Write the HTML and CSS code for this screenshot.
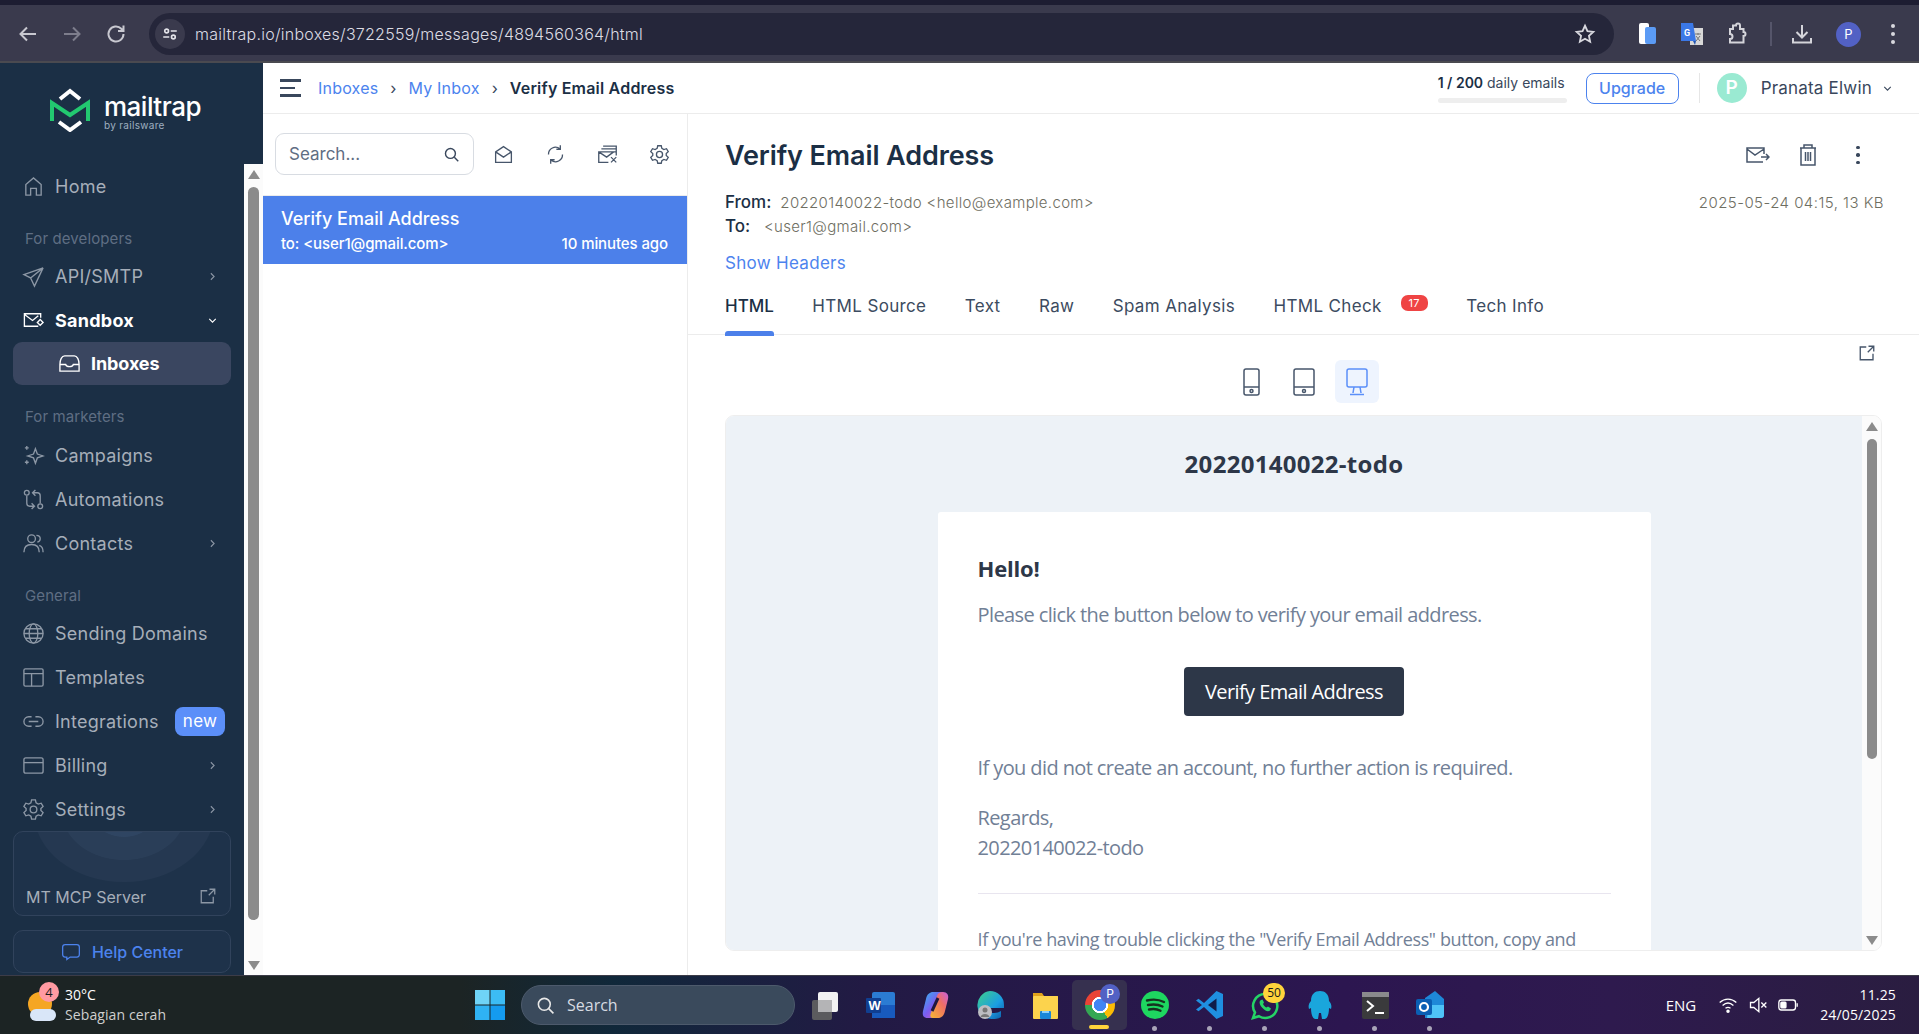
FILE: index.html
```html
<!DOCTYPE html>
<html>

<head>
    <meta charset="utf-8">
    <title>Verify Email Address - Mailtrap</title>
    <link rel="stylesheet" href="styles.css">
</head>

<body>

    <!-- browser chrome -->
    <div class="tabstrip"></div>
    <div class="toolbar">
        <svg class="tool-icon" viewBox="0 0 24 24"><path d="M20 12H5M11 5.500 4.500 12l6.500 6.500"/></svg>
        <svg class="tool-icon tool-off" viewBox="0 0 24 24"><path d="M4 12h15M13 5.500l6.500 6.500-6.500 6.500"/></svg>
        <svg class="tool-icon" viewBox="0 0 24 24"><path d="M19.500 12a7.500 7.500 0 1 1-2.200-5.300L19.500 9M19.500 3.500V9H14"/></svg>
        <div class="addressbar">
            <span class="site-btn">
                <svg viewBox="0 0 24 24"><circle cx="7.500" cy="8" r="2.500"/><path d="M13 8h8M3 16h8"/><circle cx="16.500" cy="16" r="2.500"/></svg>
            </span>
            <span class="url">mailtrap.io/inboxes/3722559/messages/4894560364/html</span>
            <svg class="star" viewBox="0 0 24 24"><path d="m12 3 2.700 6 6.300.7-4.700 4.300 1.300 6.500L12 17.200 6.400 20.500 7.700 14 3 9.700 9.300 9z"/></svg>
        </div>
        <div class="ext-group">
            <svg class="ext" viewBox="0 0 24 24"><rect x="3" y="1" width="10" height="21" rx="2" fill="#fff"/><rect x="9" y="5" width="11" height="17" rx="2" fill="#5b9bf5"/></svg>
            <svg class="ext" viewBox="0 0 24 24"><rect x="10" y="6" width="13" height="17" fill="#d8d8d8"/><path d="M1 1h12l3 18H1z" fill="#3b78e7"/><path d="m13 19 2 4 1-4z" fill="#2456b0"/><text x="4" y="14" class="ext-g">G</text><path d="M15 12h6M18 11v2M16 19l4-5M16 14l4 5" stroke="#777" fill="none"/></svg>
            <svg class="ext ext-line" viewBox="0 0 24 24"><path d="M9 3.500h3a2 2 0 0 1 4 0V7h3.500v3a2 2 0 0 1 0 4v6.500H6V17a2.500 2.500 0 0 0 0-5V7h3z"/></svg>
            <span class="tool-sep"></span>
            <svg class="ext ext-line" viewBox="0 0 24 24"><path d="M12 3v12M6.500 10l5.500 5.500 5.500-5.500M3 16v4.500h18V16"/></svg>
            <span class="chrome-avatar">P</span>
            <span class="chrome-dots"><i></i><i></i><i></i></span>
        </div>
    </div>

    <div class="app">

        <aside class="sidebar">
            <div class="logo">
                <svg class="logo-mark" viewBox="0 0 40 44">
                    <path class="logo-white" d="M10 11 20 3l10 8"/>
                    <path class="logo-green" d="M2 33V15l18 12 18-12v18"/>
                    <path class="logo-white" d="m9 34 11 8 11-8"/>
                </svg>
                <div class="logo-text">
                    <div class="logo-name">mailtrap</div>
                    <div class="logo-sub">by railsware</div>
                </div>
            </div>
            <div class="side-body">
                <nav class="side-nav">
                    <a class="nav-row"><svg class="nav-icon" viewBox="0 0 24 24"><path d="M4 21V10l8-7 8 7v11h-5v-7H9v7z"/></svg>Home</a>
                    <div class="nav-label">For developers</div>
                    <a class="nav-row"><svg class="nav-icon" viewBox="0 0 24 24"><path d="M22 3 2 10l7 3.500L22 3l-9 19-4-8.500"/></svg>API/SMTP<svg class="nav-chev" viewBox="0 0 24 24"><path d="m9 6 6 6-6 6"/></svg></a>
                    <a class="nav-row nav-on"><svg class="nav-icon" viewBox="0 0 24 24"><path d="M17 18H2.500V5h17v4M3 6l8 6 6-5"/><path d="m19 11 3 3-3 3-3-3z"/></svg>Sandbox<svg class="nav-chev" viewBox="0 0 24 24"><path d="m6 9 6 6 6-6"/></svg></a>
                    <a class="nav-row nav-sub"><svg class="nav-icon" viewBox="0 0 24 24"><path d="M2 13c0-5 2-9 5-9h10c3 0 5 4 5 9v7H2zM2 13h6c1 3 7 3 8 0h6"/></svg>Inboxes</a>
                    <div class="nav-label nav-label-tall">For marketers</div>
                    <a class="nav-row"><svg class="nav-icon" viewBox="0 0 24 24"><path d="m14 5 2 5.500 6 2-6 2-2 5.500-2-5.500-6-2 6-2zM5 2v4M3 4h4M5 17v4M3 19h4"/></svg>Campaigns</a>
                    <a class="nav-row"><svg class="nav-icon" viewBox="0 0 24 24"><circle cx="5" cy="5" r="2.500"/><circle cx="19" cy="19" r="2.500"/><path d="M5 8v8c0 2 1 3 3 3h5M10 16l3 3-3 3M19 16V8c0-2-1-3-3-3h-4M14 2l-3 3 3 3"/></svg>Automations</a>
                    <a class="nav-row"><svg class="nav-icon" viewBox="0 0 24 24"><circle cx="10" cy="7" r="4"/><path d="M2 21c0-5 3-8 8-8s8 3 8 8M15 3.500c3 0 4 2 4 3.500s-1 3-3 3.500M18 14c3 1 4 4 4 7"/></svg>Contacts<svg class="nav-chev" viewBox="0 0 24 24"><path d="m9 6 6 6-6 6"/></svg></a>
                    <div class="nav-label">General</div>
                    <a class="nav-row"><svg class="nav-icon" viewBox="0 0 24 24"><circle cx="12" cy="12" r="10"/><ellipse cx="12" cy="12" rx="4.500" ry="10"/><path d="M2 12h20M3.500 7h17M3.500 17h17"/></svg>Sending Domains</a>
                    <a class="nav-row"><svg class="nav-icon" viewBox="0 0 24 24"><rect x="2" y="3" width="20" height="18" rx="1.500"/><path d="M2 8h20M10 8v13"/></svg>Templates</a>
                    <a class="nav-row"><svg class="nav-icon" viewBox="0 0 24 24"><path d="M10 7H7a5 5 0 0 0 0 10h3M14 7h3a5 5 0 0 1 0 10h-3M7 12h10"/></svg>Integrations<span class="new-pill">new</span></a>
                    <a class="nav-row"><svg class="nav-icon" viewBox="0 0 24 24"><rect x="2" y="4" width="20" height="16" rx="2"/><path d="M2 9h20"/></svg>Billing<svg class="nav-chev" viewBox="0 0 24 24"><path d="m9 6 6 6-6 6"/></svg></a>
                    <a class="nav-row"><svg class="nav-icon" viewBox="0 0 24 24"><circle cx="12" cy="12" r="3.500"/><path d="m10 2-.7 3-2.300 1.300-3-.9-2 3.400 2.300 2.200v2l-2.300 2.200 2 3.400 3-.9L9.300 19l.7 3h4l.7-3 2.300-1.300 3 .9 2-3.400-2.300-2.200v-2l2.300-2.200-2-3.400-3 .9L14.700 5 14 2z"/></svg>Settings<svg class="nav-chev" viewBox="0 0 24 24"><path d="m9 6 6 6-6 6"/></svg></a>
                    <a class="mcp-card">
                        <span class="mcp-rings"></span>
                        <span class="mcp-name">MT MCP Server</span>
                        <svg class="mcp-link" viewBox="0 0 24 24"><path d="M11 5H3v16h16v-8M13 11l8-8M14 3h7v7"/></svg>
                    </a>
                    <a class="help-btn"><svg viewBox="0 0 24 24"><path d="M5 3h14c2 0 3 1 3 3v9c0 2-1 3-3 3h-8l-4 3v-3H5c-2 0-3-1-3-3V6c0-2 1-3 3-3z"/><path d="M8 10.500h.01M12 10.500h.01M16 10.500h.01"/></svg>Help Center</a>
                </nav>
                <div class="side-scroll">
                    <span class="arrow-up"></span>
                    <span class="side-thumb"></span>
                    <span class="arrow-down"></span>
                </div>
            </div>
        </aside>

        <div class="workspace">
            <header class="topbar">
                <span class="burger"><i></i><i></i><i></i></span>
                <a class="crumb">Inboxes</a><span class="crumb-sep">›</span>
                <a class="crumb">My Inbox</a><span class="crumb-sep">›</span>
                <strong class="crumb-now">Verify Email Address</strong>
                <div class="quota">
                    <div class="quota-text"><b>1 / 200</b> daily emails</div>
                    <div class="quota-bar"></div>
                </div>
                <a class="upgrade">Upgrade</a>
                <span class="top-sep"></span>
                <span class="user-avatar">P</span>
                <span class="user-name">Pranata Elwin</span>
                <svg class="user-chev" viewBox="0 0 24 24"><path d="m6 9 6 6 6-6"/></svg>
            </header>

            <div class="panes">
                <section class="list-pane">
                    <div class="list-tools">
                        <div class="search">
                            <span>Search...</span>
                            <svg viewBox="0 0 24 24"><circle cx="10.500" cy="10.500" r="7"/><path d="m16 16 5.500 5.500"/></svg>
                        </div>
                        <svg class="list-icon" viewBox="0 0 24 24"><path d="M3 21V9l9-6 9 6v12zM3 9l9 6 9-6"/></svg>
                        <svg class="list-icon" viewBox="0 0 24 24"><path d="M4 12a8 8 0 0 1 13-6.500M20 12a8 8 0 0 1-13 6.500M17.500 1.500v4.500H13M6.500 22.500V18H11"/></svg>
                        <svg class="list-icon" viewBox="0 0 24 24"><path d="M13 21H2V9h20v4M2 9l9 6 8-6M5 5.500h17v3M7 2.500h15v3M16 15l6 6M22 15l-6 6"/></svg>
                        <svg class="list-icon" viewBox="0 0 24 24"><circle cx="12" cy="12" r="3.500"/><path d="m10 2-.7 3-2.300 1.300-3-.9-2 3.400 2.300 2.200v2l-2.300 2.200 2 3.400 3-.9L9.300 19l.7 3h4l.7-3 2.300-1.300 3 .9 2-3.400-2.300-2.200v-2l2.300-2.200-2-3.400-3 .9L14.700 5 14 2z"/></svg>
                    </div>
                    <div class="msg-row">
                        <div class="msg-title">Verify Email Address</div>
                        <div class="msg-sub"><span>to: &lt;user1@gmail.com&gt;</span><span>10 minutes ago</span></div>
                    </div>
                </section>

                <section class="msg-pane">
                    <div class="msg-head">
                        <h1>Verify Email Address</h1>
                        <div class="msg-actions">
                            <svg viewBox="0 0 24 24"><path d="M17 19H1V5h17v6M1 6l8 6 9-6M15 14h8M20 11l3 3-3 3"/></svg>
                            <svg viewBox="0 0 24 24"><path d="M4 5h16M8 5V2h8v3M5 5v17h14V5M9.500 9v9M12 9v9M14.500 9v9"/></svg>
                            <span class="dots-dark"><i></i><i></i><i></i></span>
                        </div>
                    </div>
                    <div class="meta-line"><span class="meta-key">From:</span> <span class="meta-val">20220140022-todo &lt;hello@example.com&gt;</span><span class="meta-date">2025-05-24 04:15, 13 KB</span></div>
                    <div class="meta-line"><span class="meta-key">To:</span> &nbsp;<span class="meta-val">&lt;user1@gmail.com&gt;</span></div>
                    <a class="show-headers">Show Headers</a>

                    <div class="tabs">
                        <a class="tab tab-on">HTML</a>
                        <a class="tab">HTML Source</a>
                        <a class="tab">Text</a>
                        <a class="tab">Raw</a>
                        <a class="tab">Spam Analysis</a>
                        <a class="tab">HTML Check<span class="tab-badge">17</span></a>
                        <a class="tab">Tech Info</a>
                    </div>

                    <div class="device-bar">
                        <span class="device"><svg class="ic-phone" viewBox="0 0 17 28"><rect x="1" y="1" width="15" height="26" rx="2"/><path d="M1 19h15"/><circle cx="8.500" cy="23" r="1.500"/></svg></span>
                        <span class="device"><svg class="ic-tablet" viewBox="0 0 22 28"><rect x="1" y="1" width="20" height="26" rx="2"/><path d="M1 19h20"/><circle cx="11" cy="23" r="1.500"/></svg></span>
                        <span class="device device-on"><svg class="ic-desk" viewBox="0 0 22 28"><rect x="1" y="1" width="20" height="18" rx="2"/><path d="m8 19-1 6M14 19l1 6M4 26.500h14"/></svg></span>
                        <svg class="popout" viewBox="0 0 24 24"><path d="M11 4H3v17h17v-8M13 11l8-8M14 3h7v7"/></svg>
                    </div>

                    <div class="preview">
                        <div class="mail">
                            <div class="mail-brand">20220140022-todo</div>
                            <div class="mail-card">
                                <h2>Hello!</h2>
                                <p class="mail-p1">Please click the button below to verify your email address.</p>
                                <div class="mail-action"><a class="mail-btn">Verify Email Address</a></div>
                                <p class="mail-p2">If you did not create an account, no further action is required.</p>
                                <p class="mail-p3">Regards,<br>20220140022-todo</p>
                                <hr>
                                <p class="mail-sub">If you're having trouble clicking the "Verify Email Address" button, copy and</p>
                            </div>
                        </div>
                        <div class="prev-scroll">
                            <span class="arrow-up"></span>
                            <span class="prev-thumb"></span>
                            <span class="arrow-down"></span>
                        </div>
                    </div>
                </section>
            </div>
        </div>
    </div>

    <!-- windows taskbar -->
    <footer class="taskbar">
        <div class="weather">
            <span class="weather-icon"><span class="sun"></span><span class="cloud"></span><span class="weather-badge">4</span></span>
            <div class="weather-text">30°C<br><span>Sebagian cerah</span></div>
        </div>
        <svg class="start" viewBox="0 0 30 30">
            <rect width="14.500" height="14.500" fill="#6fd3f7"/><rect x="15.500" width="14.500" height="14.500" fill="#3cbcf5"/>
            <rect y="15.500" width="14.500" height="14.500" fill="#2fb2f3"/><rect x="15.500" y="15.500" width="14.500" height="14.500" fill="#149bef"/>
        </svg>
        <div class="tb-search">
            <svg viewBox="0 0 24 24"><circle cx="10.500" cy="10.500" r="7.500"/><path d="m16 16 6 6"/></svg>
            <span>Search</span>
        </div>
        <div class="tb-apps">
            <span class="app-slot"><svg viewBox="0 0 30 30"><rect x="2" y="10" width="20" height="20" rx="2" fill="#5b5b5e"/><rect x="8" y="2" width="20" height="20" rx="2" fill="#f2f2f2"/><rect x="8" y="10" width="14" height="12" fill="#b4b4b6"/></svg></span>
            <span class="app-slot"><svg viewBox="0 0 30 30"><rect x="7" y="2" width="23" height="26" rx="2" fill="#2b7cd3"/><rect x="7" y="15" width="23" height="13" fill="#185abd"/><rect x="1" y="8" width="15" height="15" rx="1" fill="#103f91"/><text x="3.500" y="20" class="app-w">W</text></svg></span>
            <span class="app-slot"><svg viewBox="0 0 30 30"><defs><linearGradient id="cpa" x1="0" y1="0" x2="1" y2="1"><stop offset="0" stop-color="#2fb8ee"/><stop offset=".5" stop-color="#7b5cf0"/><stop offset="1" stop-color="#ee5fa8"/></linearGradient><linearGradient id="cpb" x1="0" y1="1" x2="1" y2="0"><stop offset="0" stop-color="#f7b733"/><stop offset=".6" stop-color="#ef6f64"/><stop offset="1" stop-color="#c85fe0"/></linearGradient></defs><path d="M13 2h7c3 0 4 2 3 5l-6 18c-1 3-3 3-5 3H8c-4 0-6-2-5-7l3-12c1-5 4-7 7-7z" fill="url(#cpa)"/><path d="M18 28h-5c-3 0-3-3-2-5l6-17c1-3 3-4 5-4h1c4 0 6 3 5 7l-3 12c-1 5-4 7-7 7z" fill="url(#cpb)"/><path d="M12 21 18 8" stroke="#1f1840" stroke-width="3"/></svg></span>
            <span class="app-slot"><svg viewBox="0 0 30 30"><defs><linearGradient id="edg" x1="0" y1="0" x2="1" y2="1"><stop offset="0" stop-color="#3fd08a"/><stop offset=".6" stop-color="#1b9de2"/><stop offset="1" stop-color="#0c59a4"/></linearGradient></defs><path d="M15 1a14 14 0 0 1 14 14v3H13c0 3 2 5 6 5 3 0 5-1 7-2v6c-3 2-6 2-8 2A14 14 0 0 1 15 1z" fill="url(#edg)"/><circle cx="10" cy="22" r="7" fill="#bdbdc2"/><circle cx="10" cy="20" r="2.500" fill="#777"/><path d="M5.500 27c1-4 8-4 9 0z" fill="#777"/></svg></span>
            <span class="app-slot"><svg viewBox="0 0 30 30"><path d="M3 3h9l2 3h14v9H3z" fill="#e0a21b"/><rect x="3" y="6" width="25" height="23" rx="1" fill="#fcd34d"/><rect x="10" y="21" width="11" height="8" rx="1" fill="#1a86d8"/><rect x="12" y="21" width="7" height="2" fill="#8ed0fa"/></svg></span>
            <span class="app-slot app-active"><span class="chrome-logo"></span><span class="chrome-prof">P</span></span>
            <span class="app-slot app-dot"><svg viewBox="0 0 30 30"><circle cx="15" cy="15" r="14" fill="#1ed760"/><path class="spot" d="M7 10.500c6-1.500 12-1 17 1.500M8 15c5-1 10-.8 14.500 1.500M9 19.500c4-.8 8-.6 11.500 1.200"/></svg></span>
            <span class="app-slot app-dot"><svg viewBox="0 0 30 30"><path d="M21.500 1 28 4v22l-6.500 3L9 17l-5.500 4.200L1 19.500 7 15 1 10.500 3.500 8.800 9 13z" fill="#1f8fe0"/><path d="M21.500 8.500v13L13 15z" fill="#0f1d4a"/></svg></span>
            <span class="app-slot app-dot"><svg viewBox="0 0 30 30"><path d="M15 4a12 12 0 0 0-10 18.500L3 28l6-1.800A12 12 0 1 0 15 4z" fill="none" stroke="#25d366" stroke-width="2.500"/><path d="M11 10c-2 1-2 4 1 7.500s6 4.500 8 3l1-2-3-2-1.500 1c-1.500-.5-3-2.500-3.500-3.500l1-1.500-1.500-3z" fill="#25d366"/></svg><span class="wa-badge">50</span></span>
            <span class="app-slot app-dot"><svg viewBox="0 0 30 30"><path d="M6 11C6 4 10 1 15 1s9 3 9 10c2 2 3 5 2 8l-2-1c0 5-1 10-4 11h-3l-1-6h-2l-1 6h-3c-3-1-4-6-4-11l-2 1c-1-3 0-6 2-8z" fill="#1aa6dc"/></svg></span>
            <span class="app-slot app-dot"><svg viewBox="0 0 30 30"><rect x="2" y="2" width="27" height="27" rx="2" fill="#3a3a3c"/><rect x="2" y="2" width="27" height="5" fill="#8a8a8c"/><path d="m7 11 6 5-6 5" fill="none" stroke="#fff" stroke-width="2"/><path d="M15 23h9" stroke="#fff" stroke-width="2"/></svg></span>
            <span class="app-slot app-dot"><svg viewBox="0 0 30 30"><path d="M10 8 20 1l9 8v16c0 2-1 3-3 3H10z" fill="#1e88d8"/><path d="M14 15h15v10c0 2-1 3-3 3H12z" fill="#4fc3f7"/><rect x="1" y="9" width="16" height="16" rx="2" fill="#0a5fb4"/><circle cx="9" cy="17" r="4" fill="none" stroke="#fff" stroke-width="2.200"/></svg></span>
        </div>
        <div class="tray">
            <span class="tray-lang">ENG</span>
            <svg class="tray-icon" viewBox="0 0 24 24"><path d="M2 9c6-5.500 14-5.500 20 0M5.500 12.500c4-3.500 9-3.500 13 0M9 16c2-1.500 4-1.500 6 0"/><circle cx="12" cy="19.500" r="1.300" fill="#fff"/></svg>
            <svg class="tray-icon" viewBox="0 0 24 24"><path d="M3 9v6h4l6 5V4L7 9zM16 9l6 6M22 9l-6 6"/></svg>
            <svg class="tray-icon" viewBox="0 0 24 24"><rect x="1" y="6" width="20" height="12" rx="3"/><rect x="3.500" y="8.500" width="6" height="7" rx="1" fill="#fff"/><path d="M23 10v4"/></svg>
            <div class="tray-clock">11.25<br>24/05/2025</div>
        </div>
    </footer>

</body>

</html>
```
FILE: styles.css
```css
* {
    box-sizing: border-box;
}

html,
body {
    height: 100%;
}

body {
    margin: 0;
    display: flex;
    flex-direction: column;
    overflow: hidden;
    font-family: Inter, "Liberation Sans", sans-serif;
    color: #1b2f45;
    background: #fff;
}

svg {
    display: block;
    flex: none;
}

/* browser chrome */
.tabstrip {
    height: 5px;
    background: #1d1d32;
}

.toolbar {
    height: 58px;
    display: flex;
    align-items: center;
    padding: 2px 15px 0 16px;
    background: #3a3a4d;
    border-bottom: 2px solid #4a4a50;
}

.tool-icon {
    width: 24px;
    height: 24px;
    margin-right: 20px;
    fill: none;
    stroke: #c8c8d0;
    stroke-width: 2;
}

.tool-off {
    stroke: #7d7d8c;
}

.addressbar {
    width: 1465px;
    height: 42px;
    flex: none;
    margin-left: 1px;
    display: flex;
    align-items: center;
    border-radius: 21px;
    background: #25263a;
    padding: 0 18px 0 6px;
}

.site-btn {
    width: 30px;
    height: 30px;
    border-radius: 50%;
    background: #3a3a4d;
    display: flex;
    align-items: center;
    justify-content: center;
    margin-right: 10px;
}

.site-btn svg {
    width: 18px;
    height: 18px;
    fill: none;
    stroke: #e4e4ea;
    stroke-width: 2.200;
}

.url {
    flex: 1;
    font-size: 16px;
    font-weight: 300;
    letter-spacing: .25px;
    color: #dcdce4;
}

.star {
    width: 22px;
    height: 22px;
    fill: none;
    stroke: #d8d8de;
    stroke-width: 2;
}

.ext-group {
    flex: 1;
    display: flex;
    align-items: center;
    padding-left: 22px;
}

.ext {
    width: 24px;
    height: 24px;
    margin-right: 20px;
}

.ext-g {
    font-family: Roboto, sans-serif;
    font-size: 9px;
    font-weight: 700;
    fill: #fff;
}

.ext-line {
    fill: none;
    stroke: #d4d4da;
    stroke-width: 2;
}

.tool-sep {
    width: 2px;
    height: 24px;
    margin: 0 18px 0 2px;
    background: #55556a;
}

.chrome-avatar {
    width: 25px;
    height: 25px;
    margin-left: 2px;
    border-radius: 50%;
    background: #5261c4;
    color: #fff;
    font-size: 13px;
    line-height: 25px;
    text-align: center;
}

.chrome-dots {
    margin-left: 30px;
    display: flex;
    flex-direction: column;
    gap: 4px;
}

.chrome-dots i {
    width: 4px;
    height: 4px;
    border-radius: 50%;
    background: #d8d8de;
}

/* app */
.app {
    flex: 1;
    min-height: 0;
    display: flex;
}

.sidebar {
    width: 263px;
    flex: none;
    display: flex;
    flex-direction: column;
    background: #1b2f45;
}

.logo {
    height: 101px;
    flex: none;
    display: flex;
    padding: 25px 0 0 50px;
    gap: 14px;
}

.logo-mark {
    width: 40px;
    height: 44px;
}

.logo-mark path {
    fill: none;
    stroke-width: 4;
    stroke-linejoin: miter;
}

.logo-white {
    stroke: #fff;
}

.logo-green {
    stroke: #22c870;
}

.logo-name {
    margin-top: 3px;
    font-size: 26px;
    line-height: 32px;
    font-weight: 500;
    letter-spacing: -.5px;
    color: #fff;
}

.logo-sub {
    margin-top: -4px;
    font-size: 10px;
    line-height: 12px;
    letter-spacing: .3px;
    color: #9fb0c0;
}

.side-body {
    flex: 1;
    min-height: 0;
    display: flex;
}

.side-nav {
    width: 244px;
    flex: none;
}

.nav-row {
    height: 44px;
    display: flex;
    align-items: center;
    gap: 10px;
    padding: 0 25px 0 22px;
    font-size: 18px;
    letter-spacing: .25px;
    color: #a6aeb9;
}

.nav-icon {
    width: 23px;
    height: 23px;
    fill: none;
    stroke: #8c97a5;
    stroke-width: 1.400;
}

.nav-chev {
    width: 13px;
    height: 13px;
    margin-left: auto;
    fill: none;
    stroke: #8c97a5;
    stroke-width: 2;
}

.nav-on {
    color: #fff;
    font-weight: 700;
}

.nav-on .nav-icon,
.nav-on .nav-chev {
    stroke: #fff;
}

.nav-sub {
    height: 43px;
    margin: 0 13px;
    padding-left: 45px;
    border-radius: 9px;
    background: #3a4660;
    color: #fff;
    font-weight: 700;
    letter-spacing: -.1px;
}

.nav-sub .nav-icon {
    stroke: #fff;
}

.nav-label {
    height: 46px;
    padding: 15px 0 0 25px;
    font-size: 15px;
    line-height: 31px;
    letter-spacing: .1px;
    color: #5f6e83;
}

.nav-label-tall {
    height: 48px;
    padding-top: 16px;
}

.new-pill {
    width: 50px;
    height: 29px;
    margin-left: auto;
    margin-right: -6px;
    border-radius: 8px;
    background: #5b8ff9;
    color: #fff;
    font-size: 17px;
    line-height: 29px;
    text-align: center;
}

.mcp-card {
    position: relative;
    height: 85px;
    margin: 0 13px;
    display: flex;
    align-items: flex-end;
    justify-content: space-between;
    padding: 0 13px 8px 12px;
    border: 1px solid #31435c;
    border-radius: 10px;
    background: #1e324a;
    overflow: hidden;
    font-size: 16px;
    color: #a6aeb9;
}

.mcp-rings {
    position: absolute;
    left: 20px;
    top: -90px;
    width: 180px;
    height: 140px;
    border-radius: 50%;
    background: radial-gradient(closest-side, #2f4562 35%, #2a3e58 36%, #2a3e58 68%, #253851 69%);
}

.mcp-name,
.mcp-link {
    position: relative;
}

.mcp-link {
    width: 18px;
    height: 18px;
    margin-bottom: 2px;
    fill: none;
    stroke: #8c97a5;
    stroke-width: 1.700;
}

.help-btn {
    height: 43px;
    margin: 14px 13px 0;
    display: flex;
    align-items: center;
    justify-content: center;
    gap: 11px;
    border: 1px solid #31435c;
    border-radius: 10px;
    background: #1e324a;
    font-size: 16px;
    font-weight: 500;
    color: #4c83ee;
}

.help-btn svg {
    width: 20px;
    height: 20px;
    fill: none;
    stroke: #4c83ee;
    stroke-width: 1.500;
}

.side-scroll {
    width: 19px;
    display: flex;
    flex-direction: column;
    align-items: center;
    background: #fbfbfb;
    padding-top: 6px;
}

.arrow-up,
.arrow-down {
    width: 0;
    height: 0;
    flex: none;
    border-left: 6px solid transparent;
    border-right: 6px solid transparent;
}

.arrow-up {
    border-bottom: 9px solid #8b8b8b;
}

.arrow-down {
    margin-top: auto;
    margin-bottom: 5px;
    border-top: 9px solid #8b8b8b;
}

.side-thumb {
    width: 11px;
    height: 733px;
    margin-top: 8px;
    border-radius: 6px;
    background: #8b8b8b;
}

.workspace {
    flex: 1;
    min-width: 0;
    display: flex;
    flex-direction: column;
}

/* top bar */
.topbar {
    height: 51px;
    flex: none;
    display: flex;
    align-items: center;
    padding: 0 25px 0 17px;
    border-bottom: 1px solid #ececec;
    font-size: 16px;
}

.burger {
    width: 21px;
    margin-right: 17px;
    display: flex;
    flex-direction: column;
    gap: 5px;
}

.burger i {
    height: 2.500px;
    background: #39475c;
}

.burger i:nth-child(2) {
    width: 15px;
}

.crumb {
    letter-spacing: .2px;
    color: #4c83ee;
}

.crumb-sep {
    margin: 0 12px;
    color: #39475c;
}

.crumb-now {
    font-weight: 600;
    letter-spacing: .2px;
    color: #1b2f45;
}

.quota {
    width: 129px;
    margin-left: auto;
}

.quota-text {
    font-size: 14px;
    line-height: 18px;
    white-space: nowrap;
    color: #39475c;
}

.quota-text b {
    font-weight: 600;
    color: #1b2f45;
}

.quota-bar {
    height: 5px;
    margin-top: 6px;
    border-radius: 3px;
    background: #eee;
}

.upgrade {
    width: 93px;
    height: 31px;
    margin-left: 19px;
    border: 1px solid #4c83ee;
    border-radius: 8px;
    font-weight: 500;
    line-height: 29px;
    text-align: center;
    color: #4c83ee;
}

.top-sep {
    width: 1px;
    height: 30px;
    margin: 0 17px 0 20px;
    background: #e6e6e6;
}

.user-avatar {
    width: 30px;
    height: 30px;
    border-radius: 50%;
    background: #9aead2;
    color: #fff;
    font-size: 19px;
    font-weight: 600;
    line-height: 30px;
    text-align: center;
}

.user-name {
    margin-left: 14px;
    font-size: 17px;
    letter-spacing: .2px;
    color: #39475c;
}

.user-chev {
    width: 13px;
    height: 13px;
    margin-left: 9px;
    fill: none;
    stroke: #39475c;
    stroke-width: 2;
}

.panes {
    flex: 1;
    min-height: 0;
    display: flex;
}

/* list */
.list-pane {
    width: 425px;
    flex: none;
    border-right: 1px solid #ececec;
}

.list-tools {
    height: 82px;
    display: flex;
    align-items: center;
    padding: 0 0 1px 12px;
    border-bottom: 1px solid #ececec;
}

.search {
    width: 199px;
    height: 42px;
    flex: none;
    margin-right: 19px;
    display: flex;
    align-items: center;
    justify-content: space-between;
    padding: 0 13px;
    border: 1px solid #d8dce2;
    border-radius: 9px;
    font-size: 17px;
    color: #5f6e83;
}

.search svg {
    width: 17px;
    height: 17px;
    fill: none;
    stroke: #39475c;
    stroke-width: 2;
}

.list-icon {
    width: 21px;
    height: 21px;
    margin-right: 31px;
    fill: none;
    stroke: #47566b;
    stroke-width: 1.500;
}

.list-icon:last-child {
    margin-right: 0;
}

.msg-row {
    height: 68px;
    padding: 12px 19px 0 18px;
    background: #4c80ea;
    color: #fff;
}

.msg-title {
    font-size: 18px;
    line-height: 22px;
    font-weight: 500;
}

.msg-sub {
    margin-top: 5px;
    display: flex;
    justify-content: space-between;
    font-size: 15px;
    line-height: 18px;
    font-weight: 500;
    letter-spacing: -.1px;
}

/* message */
.msg-pane {
    flex: 1;
    min-width: 0;
    display: flex;
    flex-direction: column;
    padding-left: 37px;
}

.msg-head {
    height: 76px;
    flex: none;
    display: flex;
    align-items: center;
    justify-content: space-between;
    padding: 6px 49px 0 0;
}

h1 {
    margin: 0;
    font-size: 27px;
    font-weight: 600;
    letter-spacing: -.1px;
}

.msg-actions {
    display: flex;
    align-items: center;
    gap: 26px;
}

.msg-actions svg {
    width: 24px;
    height: 24px;
    fill: none;
    stroke: #47566b;
    stroke-width: 1.500;
}

.dots-dark {
    width: 24px;
    display: flex;
    flex-direction: column;
    align-items: center;
    gap: 4px;
}

.dots-dark i {
    width: 3.500px;
    height: 3.500px;
    border-radius: 50%;
    background: #39475c;
}

.meta-line {
    height: 24px;
    flex: none;
    display: flex;
    align-items: center;
    padding-right: 35px;
    font-size: 17px;
}

.meta-key {
    margin-right: 9px;
    font-weight: 500;
}

.meta-val {
    font-size: 15px;
    font-weight: 300;
    letter-spacing: .33px;
    color: #6e6e62;
}

.meta-date {
    margin-left: auto;
    font-size: 15px;
    font-weight: 300;
    letter-spacing: .45px;
    color: #6e6e62;
}

.show-headers {
    margin-top: 13px;
    flex: none;
    font-size: 17px;
    line-height: 24px;
    letter-spacing: .3px;
    color: #4c83ee;
}

.tabs {
    height: 60px;
    flex: none;
    display: flex;
    align-items: flex-start;
    gap: 38.400px;
    margin: 0 0 0 -37px;
    padding: 19px 0 0 37px;
    border-bottom: 1px solid #ececec;
    font-size: 17px;
    letter-spacing: .35px;
    color: #3c4b60;
}

.tab {
    position: relative;
    line-height: 24px;
    display: flex;
    gap: 19px;
}

.tab-on {
    font-weight: 500;
    letter-spacing: 0;
    color: #1b2f45;
}

.tab-on::after {
    content: "";
    position: absolute;
    left: 0;
    right: 0;
    top: 37px;
    height: 5px;
    border-radius: 3px 3px 0 0;
    background: #4c80ea;
}

.tab-badge {
    width: 27px;
    height: 16px;
    margin-top: 1px;
    border-radius: 7px;
    background: #ef4444;
    color: #fff;
    font-size: 11px;
    line-height: 16px;
    text-align: center;
}

.device-bar {
    position: relative;
    height: 80px;
    flex: none;
    display: flex;
    justify-content: center;
    align-items: flex-start;
    gap: 9px;
    padding: 25px 36px 0 0;
}

.device {
    width: 44px;
    height: 43px;
    display: flex;
    align-items: center;
    justify-content: center;
    border-radius: 6px;
}

.device svg {
    height: 28px;
    width: auto;
    fill: none;
    stroke: #47566b;
    stroke-width: 1.500;
}

.device-on {
    background: #eef4fe;
}

.device-on svg {
    stroke: #5b8ff9;
}

.popout {
    position: absolute;
    right: 43px;
    top: 9px;
    width: 18px;
    height: 18px;
    fill: none;
    stroke: #47566b;
    stroke-width: 1.800;
}

/* preview */
.preview {
    height: 536px;
    width: 1157px;
    flex: none;
    display: flex;
    border: 1px solid #eee;
    border-radius: 9px;
    overflow: hidden;
}

.mail {
    flex: 1;
    min-width: 0;
    padding-top: 24px;
    overflow: hidden;
    background: #edf2f7;
    font-family: "Open Sans", sans-serif;
    color: #718096;
}

.mail-brand {
    height: 72px;
    font-size: 24px;
    line-height: 48px;
    font-weight: 700;
    letter-spacing: .3px;
    text-align: center;
    color: #2d3748;
}

.mail-card {
    width: 713px;
    height: 500px;
    margin: 0 auto;
    padding: 39px 40px;
    background: #fff;
    border-radius: 3px 3px 0 0;
    font-size: 20px;
    letter-spacing: -.6px;
}

h2 {
    margin: 0;
    font-size: 22px;
    line-height: 34px;
    font-weight: 700;
    letter-spacing: -.2px;
    color: #2d3748;
}

.mail-card p {
    margin: 0;
    line-height: 30px;
}

.mail-p1 {
    padding-top: 15px;
}

.mail-action {
    margin-top: 37px;
    display: flex;
    justify-content: center;
}

.mail-btn {
    width: 220px;
    height: 49px;
    border-radius: 4px;
    background: #2d3748;
    color: #fff;
    line-height: 50px;
    text-align: center;
}

.mail-card .mail-p2 {
    padding-top: 37px;
}

.mail-card .mail-p3 {
    padding-top: 20px;
}

hr {
    height: 1px;
    margin: 30px 0 30px;
    border: 0;
    background: #e8e5ef;
}

.mail-card .mail-sub {
    font-size: 18px;
    letter-spacing: -.4px;
}

.prev-scroll {
    width: 19px;
    flex: none;
    display: flex;
    flex-direction: column;
    align-items: center;
    padding-top: 6px;
    background: #fbfbfb;
}

.prev-thumb {
    width: 10px;
    height: 320px;
    margin-top: 8px;
    border-radius: 5px;
    background: #8b8b8b;
}

/* taskbar */
.taskbar {
    height: 59px;
    flex: none;
    display: flex;
    align-items: center;
    border-top: 1px solid #3c3c48;
    background: linear-gradient(90deg, #1c2424 0, #1c2424 24%, #10283a 32%, #221a44 45%, #2c1650 70%, #2e1a4e 84%, #2a1d40 100%);
    color: #fff;
}

.weather {
    width: 475px;
    flex: none;
    display: flex;
    align-items: center;
    padding-left: 28px;
    gap: 10px;
}

.weather-icon {
    position: relative;
    width: 27px;
    height: 32px;
}

.sun {
    position: absolute;
    left: 0;
    top: 3px;
    width: 24px;
    height: 24px;
    border-radius: 50%;
    background: #f5a623;
}

.cloud {
    position: absolute;
    left: 2px;
    top: 20px;
    width: 26px;
    height: 12px;
    border-radius: 8px;
    background: #d9e6f8;
}

.weather-badge {
    position: absolute;
    left: 11px;
    top: -7px;
    width: 20px;
    height: 20px;
    border-radius: 50%;
    background: #ff9aa2;
    color: #1b1b1b;
    font-size: 13px;
    line-height: 20px;
    text-align: center;
    font-family: "Open Sans", sans-serif;
}

.weather-text {
    font-family: "Open Sans", sans-serif;
    font-size: 14px;
    line-height: 20px;
}

.weather-text span {
    letter-spacing: .1px;
    color: #cfcfcf;
}

.start {
    width: 30px;
    height: 30px;
    margin-right: 16px;
}

.tb-search {
    width: 274px;
    height: 40px;
    flex: none;
    display: flex;
    align-items: center;
    padding-left: 14px;
    gap: 12px;
    border: 1px solid #4d5a6c;
    border-radius: 20px;
    background: #3a4a5c;
    font-family: "Open Sans", sans-serif;
    font-size: 16px;
    color: #d6dbe2;
}

.tb-search svg {
    width: 19px;
    height: 19px;
    fill: none;
    stroke: #e8e8e8;
    stroke-width: 2;
}

.tb-apps {
    display: flex;
    margin-left: 2px;
}

.app-slot {
    position: relative;
    width: 55px;
    height: 50px;
    display: flex;
    align-items: center;
    justify-content: center;
}

.app-slot svg {
    width: 30px;
    height: 30px;
}

.app-w {
    font-family: "Liberation Sans", sans-serif;
    font-size: 13px;
    font-weight: 700;
    fill: #fff;
}

.spot {
    fill: none;
    stroke: #16331f;
    stroke-width: 2.400;
    stroke-linecap: round;
}

.app-dot::after {
    content: "";
    position: absolute;
    left: 25px;
    bottom: -1px;
    width: 5px;
    height: 5px;
    border-radius: 50%;
    background: #a9a4b8;
}

.app-active {
    background: #36304f;
    border-radius: 5px;
}

.app-active::after {
    content: "";
    position: absolute;
    left: 17px;
    bottom: 1px;
    width: 20px;
    height: 4px;
    border-radius: 2px;
    background: #ffd43b;
}

.chrome-logo {
    width: 30px;
    height: 30px;
    border-radius: 50%;
    background:
        radial-gradient(circle, #4285f4 0 6px, #fff 6.500px 8px, transparent 8.500px),
        conic-gradient(#ea4335 0 30deg, #fbbc05 30deg 150deg, #34a853 150deg 270deg, #ea4335 270deg);
}

.chrome-prof {
    position: absolute;
    left: 28px;
    top: 4px;
    width: 20px;
    height: 20px;
    border-radius: 50%;
    background: #5261c4;
    font-size: 12px;
    line-height: 20px;
    text-align: center;
}

.wa-badge {
    position: absolute;
    left: 26px;
    top: 3px;
    width: 22px;
    height: 20px;
    border-radius: 10px;
    background: #ffd43b;
    color: #1b1b1b;
    font-family: "Open Sans", sans-serif;
    font-size: 12px;
    line-height: 20px;
    text-align: center;
}

.tray {
    flex: 1;
    display: flex;
    align-items: center;
    padding: 0 23px 0 0;
    font-family: "Open Sans", sans-serif;
}

.tray-lang {
    margin-left: auto;
    margin-right: 22px;
    font-size: 15px;
}

.tray-icon {
    width: 20px;
    height: 20px;
    margin-right: 10px;
    fill: none;
    stroke: #fff;
    stroke-width: 1.600;
}

.tray-clock {
    margin-left: 12px;
    font-size: 14px;
    line-height: 20px;
    letter-spacing: .15px;
    text-align: right;
}
```
